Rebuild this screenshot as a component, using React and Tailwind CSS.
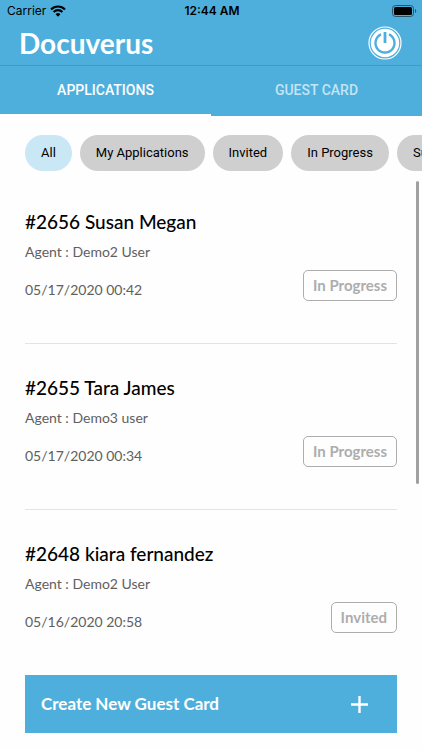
import { useState } from 'react'

const tabs = ['APPLICATIONS', 'GUEST CARD']

const filters = ['All', 'My Applications', 'Invited', 'In Progress', 'Submitted']

const applications = [
  { id: 2656, name: 'Susan Megan', agent: 'Demo2 User', date: '05/17/2020 00:42', status: 'In Progress' },
  { id: 2655, name: 'Tara James', agent: 'Demo3 user', date: '05/17/2020 00:34', status: 'In Progress' },
  { id: 2648, name: 'kiara fernandez', agent: 'Demo2 User', date: '05/16/2020 20:58', status: 'Invited' },
]

function StatusBar() {
  return (
    <div className="grid h-[21px] grid-cols-3 items-center pl-[7px] pr-[5px] font-['Inter',sans-serif] text-[12px] text-black">
      <div className="flex items-center gap-1">
        <span>Carrier</span>
        <svg width="16" height="12" viewBox="0 0 16 12" fill="none" stroke="black" strokeWidth="2.1">
          <path d="M1 4.4a9.9 9.9 0 0 1 14 0" />
          <path d="M3.6 7a6.2 6.2 0 0 1 8.8 0" />
          <path d="M8 11.7 5.6 9.2a3.4 3.4 0 0 1 4.8 0z" fill="black" stroke="none" />
        </svg>
      </div>
      <span className="text-center font-semibold">12:44 AM</span>
      <svg className="justify-self-end" width="25" height="12" viewBox="0 0 25 12">
        <rect x="0.5" y="0.5" width="21" height="11" rx="3" fill="none" stroke="#27566b" />
        <rect x="2" y="2" width="18" height="8" rx="1.5" fill="black" />
        <path d="M23 4v4a2.2 2.2 0 0 0 0-4z" fill="#27566b" />
      </svg>
    </div>
  )
}

function PowerIcon() {
  return (
    <svg width="34" height="34" viewBox="0 0 34 34" fill="none">
      <circle cx="17" cy="17" r="16" stroke="white" strokeWidth="1.2" />
      <circle cx="17" cy="17" r="14.2" fill="white" />
      <path d="M13 8.4a9.5 9.5 0 1 0 8 0" stroke="#4eafdd" strokeWidth="2.4" />
      <path d="M17 6v11" stroke="#4eafdd" strokeWidth="2.8" />
    </svg>
  )
}

export default function App() {
  const [tab, setTab] = useState('APPLICATIONS')
  const [filter, setFilter] = useState('All')

  return (
    <div className="min-h-screen overflow-x-hidden bg-[#fefefe] font-['Lato',sans-serif]">
      <header className="bg-[#4eafdd]">
        <StatusBar />
        <div className="flex h-[45px] items-center justify-between border-b border-[#4499c2] pl-[19px] pr-5">
          <h1 className="text-[28px] leading-8 font-bold text-white">Docuverus</h1>
          <button aria-label="Log out" onClick={() => setFilter('All')}>
            <PowerIcon />
          </button>
        </div>
        <nav className="grid grid-cols-2 font-['Roboto',sans-serif] text-[14px] font-medium">
          {tabs.map((name) => (
            <button
              key={name}
              onClick={() => setTab(name)}
              className={`h-[50px] border-b-2 ${tab === name ? 'border-white text-white' : 'border-transparent text-[#c3e4f4]'}`}
            >
              {name}
            </button>
          ))}
        </nav>
      </header>

      <div className="flex gap-2 overflow-hidden pt-[19px] pl-[25px] font-['Roboto',sans-serif] text-[13px] text-black">
        {filters.map((name) => (
          <button
            key={name}
            onClick={() => setFilter(name)}
            className={`h-9 shrink-0 rounded-full px-4 ${filter === name ? 'bg-[#c9e7f5]' : 'bg-[#cfcfcf]'}`}
          >
            {name}
          </button>
        ))}
      </div>

      <main className="relative mt-[7px] px-[25px]">
        <ul className="divide-y divide-[#e4e4e4]">
          {applications.map((item) => (
            <li key={item.id} className="pt-8 pb-[42px]">
              <h2 className="text-[19px] leading-6 font-medium text-black">
                #{item.id} {item.name}
              </h2>
              <p className="mt-2 text-[14px] leading-5 text-[#606060]">Agent : {item.agent}</p>
              <div className="mt-2 flex items-end justify-between">
                <time className="text-[14px] leading-[22px] text-[#606060]">{item.date}</time>
                <span className="rounded-[5px] border border-[#adadad] px-[9px] pt-[3px] pb-1 text-[15px] leading-[22px] font-bold text-[#adadad]">
                  {item.status}
                </span>
              </div>
            </li>
          ))}
        </ul>
        <div className="absolute top-[3px] right-[3px] h-[303px] w-[3px] rounded-full bg-[#a0a0a0]" />
      </main>

      <div className="px-[25px] pb-4">
        <button className="flex h-[58px] w-full items-center justify-between bg-[#4eafdd] pr-[29px] pl-4 text-[17px] font-bold text-white">
          <span>Create New Guest Card</span>
          <svg width="17" height="17" viewBox="0 0 17 17" stroke="white" strokeWidth="2.4">
            <path d="M8.5 0v17M0 8.5h17" />
          </svg>
        </button>
      </div>
    </div>
  )
}
